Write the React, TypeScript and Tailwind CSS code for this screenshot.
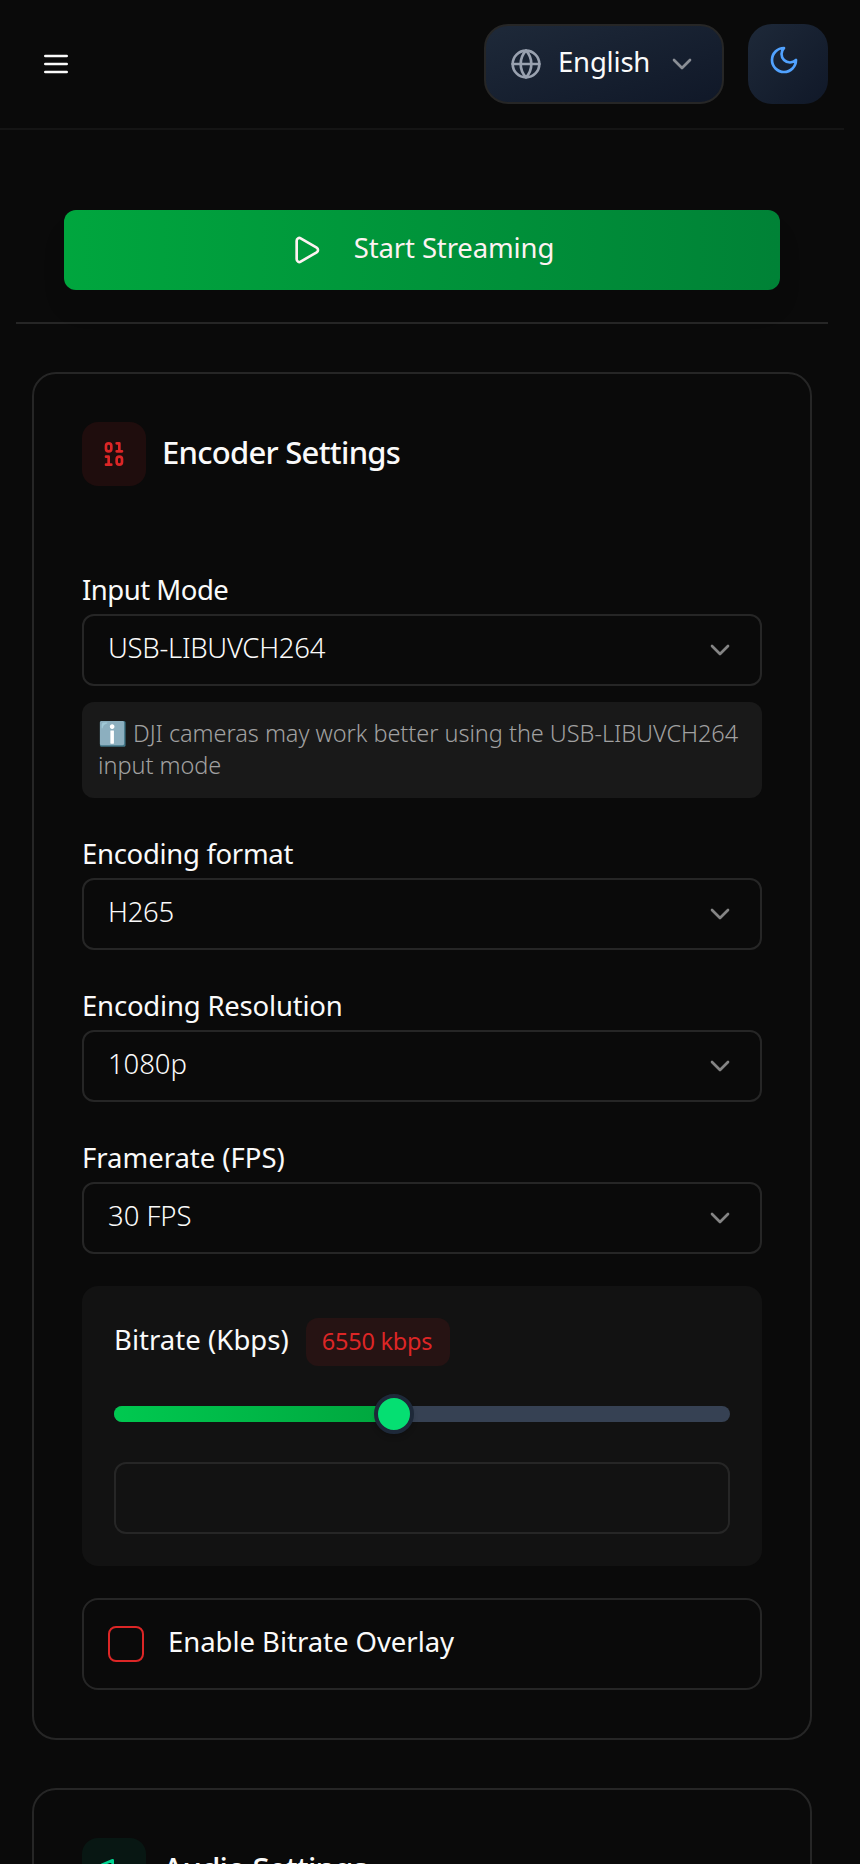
import type { ReactNode } from "react";

function Icon({ children, className = "" }: { children: ReactNode; className?: string }) {
  return (
    <svg
      viewBox="0 0 24 24"
      fill="none"
      stroke="currentColor"
      strokeWidth={2}
      strokeLinecap="round"
      strokeLinejoin="round"
      className={`size-8 shrink-0 ${className}`}
    >
      {children}
    </svg>
  );
}

function Chevron({ className = "text-[#848484]" }: { className?: string }) {
  return (
    <Icon className={className}>
      <path d="m6 9 6 6 6-6" />
    </Icon>
  );
}

function Header() {
  return (
    <header className="flex h-[130px] items-center justify-between border-b-2 border-[#151515] pr-4 pl-10">
      <button aria-label="Menu">
        <Icon>
          <path d="M4 6h16M4 12h16M4 18h16" />
        </Icon>
      </button>
      <div className="flex gap-6">
        <button className="flex h-20 w-60 items-center rounded-3xl border-2 border-[#262626] bg-linear-to-br from-[#1e2939] to-[#101828] px-6">
          <Icon className="text-[#99a1af]">
            <circle cx="12" cy="12" r="10" />
            <path d="M12 2a14.5 14.5 0 0 0 0 20 14.5 14.5 0 0 0 0-20M2 12h20" />
          </Icon>
          <span className="ml-4 pb-[5px] text-[27.5px] leading-8 tracking-[-0.2px]">English</span>
          <Chevron className="ml-auto text-[#8a8e95]" />
        </button>
        <button
          aria-label="Theme"
          className="flex size-20 rounded-3xl bg-linear-to-br from-[#1e2939] to-[#101828] pt-5 pl-5"
        >
          <Icon className="text-[#51a2ff]">
            <path d="M12 3a6 6 0 0 0 9 9 9 9 0 1 1-9-9Z" />
          </Icon>
        </button>
      </div>
    </header>
  );
}

function CardTitle({ icon, tile, children }: { icon: ReactNode; tile: string; children: ReactNode }) {
  return (
    <div className="flex items-center gap-4">
      <div className={`flex size-16 items-center justify-center rounded-2xl ${tile}`}>{icon}</div>
      {children}
    </div>
  );
}

function Field({ label, tracking, children }: { label: string; tracking: string; children: ReactNode }) {
  return (
    <div className="flex flex-col gap-2.5">
      <label className={`pt-px text-[27.5px] leading-7 ${tracking}`}>{label}</label>
      {children}
    </div>
  );
}

function Select({ value, tracking }: { value: string; tracking: string }) {
  return (
    <button className="flex h-[72px] items-center justify-between rounded-xl border-2 border-[#262626] px-6">
      <span className={`pb-1 text-[27.5px] leading-8 font-light ${tracking}`}>{value}</span>
      <Chevron />
    </button>
  );
}

function BitratePanel() {
  return (
    <div className="h-[280px] rounded-2xl bg-[#121212] p-8">
      <div className="flex h-12 items-center gap-4">
        <span className="w-44 pb-1 text-[27.5px] leading-8 tracking-[0.04px] whitespace-nowrap">
          Bitrate (Kbps)
        </span>
        <span className="flex h-12 w-36 items-center justify-center rounded-xl bg-[#261313] pr-0.5 pb-0.5 text-[23.5px] leading-8 tracking-[-0.25px] text-[#dc2626]">
          6550 kbps
        </span>
      </div>
      <div className="mt-10 flex h-4 items-center rounded-full bg-[#364153]">
        <div className="h-4 w-[280px] rounded-l-full bg-linear-to-r from-[#00c950] to-[#00a63e]" />
        <div className="-ml-5 size-10 rounded-full border-4 border-[#1e2939] bg-[#05df72] shadow-md" />
      </div>
      <input className="mt-10 h-[72px] w-full rounded-xl border-2 border-[#262626] bg-transparent px-6" />
    </div>
  );
}

export default function App() {
  return (
    <div className="h-[1864px] overflow-hidden bg-[#0a0a0a] pr-4 font-['Noto_Sans',sans-serif] text-[#fafafa]">
      <Header />
      <main className="px-4 pt-20">
        <div className="border-b-2 border-[#262626] px-12 pb-8">
          <button className="flex h-20 w-full items-center justify-center gap-8 rounded-xl bg-linear-to-r from-[#00a63e] to-[#008236] text-[#fef2f2] shadow-[0_20px_30px_-6px_rgba(0,0,0,0.1)]">
            <Icon>
              <path d="M5 5a2 2 0 0 1 3.008-1.728l11.997 6.998a2 2 0 0 1 .003 3.458l-12 7A2 2 0 0 1 5 19z" />
            </Icon>
            <span className="pb-1 text-[27.5px] leading-8 tracking-[-0.13px]">Start Streaming</span>
          </button>
        </div>

        <div className="flex flex-col gap-12 px-4 pt-12">
          <section className="h-[1368px] rounded-3xl border-2 border-[#262626] px-12 pt-12">
            <CardTitle
              tile="bg-[#1f0d0d] text-[#dc2626]"
              icon={
                <Icon>
                  <rect x="14" y="14" width="4" height="6" rx="2" />
                  <rect x="6" y="4" width="4" height="6" rx="2" />
                  <path d="M6 20h4M14 10h4M6 14h2v6M14 4h2v6" />
                </Icon>
              }
            >
              <h2 className="pb-1 text-[31px] leading-10 font-medium tracking-[-0.72px]">Encoder Settings</h2>
            </CardTitle>

            <div className="mt-[89px] flex flex-col gap-[41px]">
              <div>
                <Field label="Input Mode" tracking="tracking-[-0.5px]">
                  <Select value="USB-LIBUVCH264" tracking="tracking-[-0.27px]" />
                </Field>
                <p className="mt-4 h-24 rounded-xl bg-[#191919] px-4 pt-[15px] text-[23.5px] leading-8 font-light tracking-[-0.04px] text-[#a1a1a1]">
                  ℹ️ DJI cameras may work better using the USB-LIBUVCH264
                  <br />
                  input mode
                </p>
              </div>
              <Field label="Encoding format" tracking="tracking-[-0.31px]">
                <Select value="H265" tracking="tracking-[-0.27px]" />
              </Field>
              <Field label="Encoding Resolution" tracking="tracking-[-0.2px]">
                <Select value="1080p" tracking="tracking-[-0.08px]" />
              </Field>
              <Field label="Framerate (FPS)" tracking="tracking-[-0.02px]">
                <Select value="30 FPS" tracking="tracking-[-0.03px]" />
              </Field>
            </div>

            <div className="mt-8 flex flex-col gap-8">
              <BitratePanel />
              <label className="flex h-[92px] items-center gap-6 rounded-2xl border-2 border-[#262626] px-6">
                <span className="size-9 rounded-lg border-2 border-[#dc2626]" />
                <span className="pb-[5px] text-[27.5px] leading-8 tracking-[-0.04px]">Enable Bitrate Overlay</span>
              </label>
            </div>
          </section>

          <section className="h-[600px] rounded-3xl border-2 border-[#262626] px-12 pt-12">
            <CardTitle
              tile="bg-[#081713] text-[#00d492]"
              icon={
                <Icon>
                  <path d="M11 19.3V4.7L3 8v8zM16 9a5 5 0 0 1 0 6" />
                </Icon>
              }
            >
              <h2 className="pb-1 pl-px text-[31px] leading-10 font-medium tracking-[-0.8px]">Audio Settings</h2>
            </CardTitle>
          </section>
        </div>
      </main>
    </div>
  );
}
